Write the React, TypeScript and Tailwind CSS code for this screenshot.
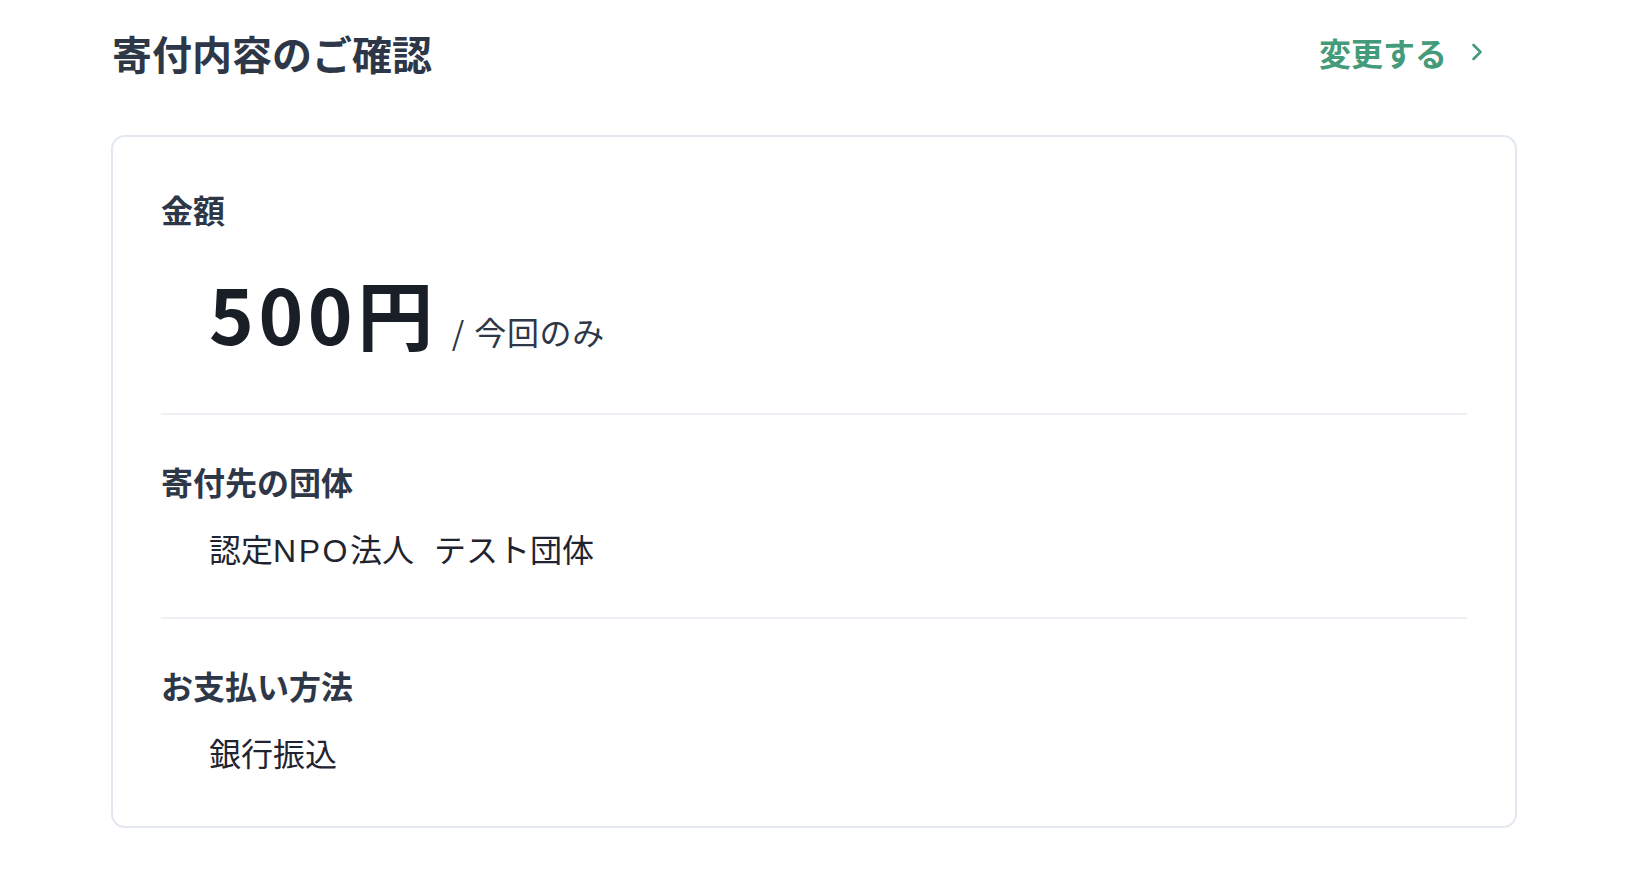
/**
 * Donation confirmation
 * Summary card shown before the donor submits
 */

const font = { fontFamily: '"Noto Sans CJK JP", "Noto Sans", sans-serif' };
const latinFirst = { fontFamily: '"Liberation Sans", "Noto Sans CJK JP", sans-serif' };

type Row = {
  label: string;
  value: React.ReactNode;
};

function ChevronRight() {
  return (
    <svg width="12" height="18" viewBox="0 0 12 18" fill="none" aria-hidden="true">
      <path
        d="M2.5 2 L9.5 9 L2.5 16"
        stroke="currentColor"
        strokeWidth="2.6"
        strokeLinecap="round"
        strokeLinejoin="round"
      />
    </svg>
  );
}

export default function App() {
  const rows: Row[] = [
    {
      label: '寄付先の団体',
      value: (
        <span style={latinFirst}>
          認定<span className="tracking-[0.08em]">NPO</span>法人
          <span className="ml-[20px]">テスト団体</span>
        </span>
      ),
    },
    { label: 'お支払い方法', value: '銀行振込' },
  ];

  return (
    <div className="min-h-screen bg-white" style={font}>
      <main className="px-[111px] pt-[23px] pb-10">
        {/* Header */}
        <div className="flex items-center justify-between pr-[34px] mb-[52px]">
          <h1 className="text-[40px] leading-[60px] font-bold text-[#2d3748] pl-px">
            寄付内容のご確認
          </h1>
          <button className="flex items-center gap-[24px] text-[#449b7a] -mt-[2px]">
            <span className="text-[32px] leading-[48px] font-bold">変更する</span>
            <ChevronRight />
          </button>
        </div>

        {/* Summary card */}
        <section className="rounded-[14px] border-2 border-[#e2e8f0] px-12 pt-12 pb-[50px]">
          {/* Amount */}
          <div className="pb-[56px] border-b-2 border-[#edf1f5]">
            <h2 className="text-[32px] leading-[48px] font-bold text-[#2d3748]">金額</h2>
            <div className="mt-[34px] pl-12 flex items-baseline">
              <span className="text-[76px] leading-[90px] font-bold text-[#1a1e27] tracking-[0.06em]">
                500円
              </span>
              <span className="ml-[14px] text-[32px] leading-[48px] text-[#2d3748]">
                /<span className="ml-[10px] tracking-[0.02em]">今回のみ</span>
              </span>
            </div>
          </div>

          {rows.map((row, i) => (
            <div
              key={row.label}
              className={
                i < rows.length - 1
                  ? 'pt-[42px] pb-[45px] border-b-2 border-[#edf1f5]'
                  : 'pt-[42px]'
              }
            >
              <h2 className="text-[32px] leading-[48px] font-bold text-[#2d3748]">{row.label}</h2>
              <p className="mt-[19px] pl-12 h-[48px] text-[32px] leading-[48px] text-[#1f2430]">
                {row.value}
              </p>
            </div>
          ))}
        </section>
      </main>
    </div>
  );
}
